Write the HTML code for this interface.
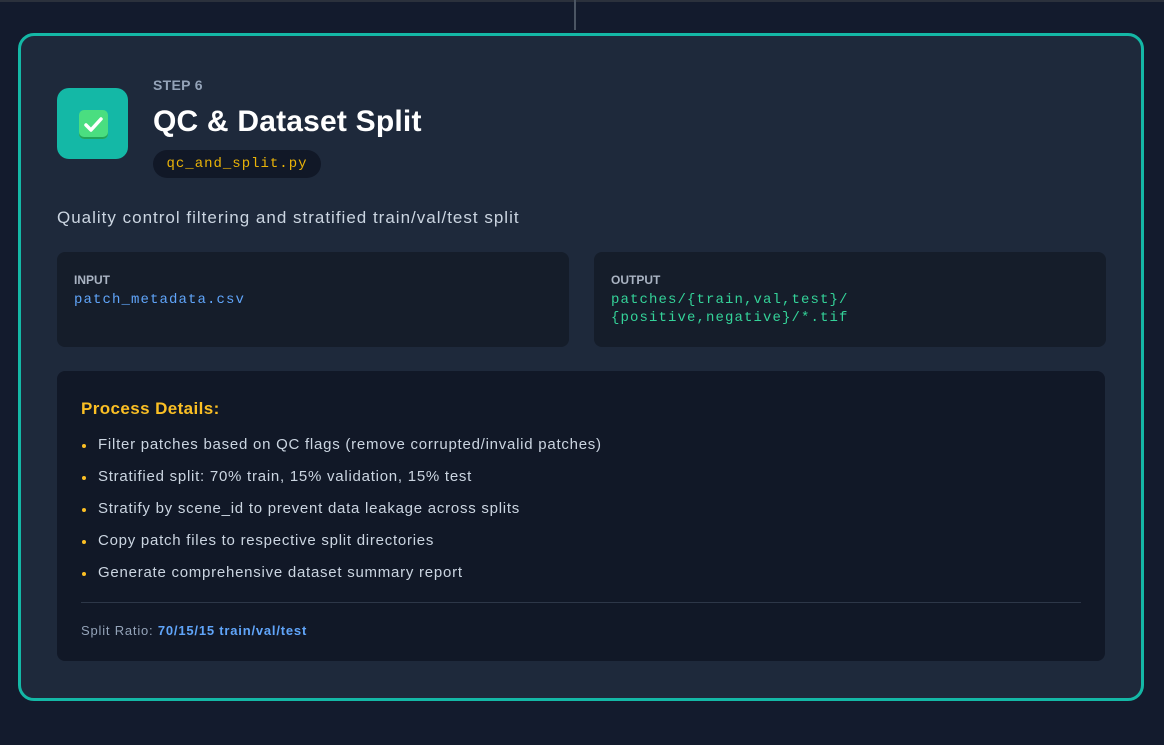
<!DOCTYPE html>
<html><head><style>
*{margin:0;padding:0;box-sizing:border-box}
body{width:1164px;height:745px;background:#131b2d;font-family:"Liberation Sans",sans-serif;position:relative;overflow:hidden}
.topline{position:absolute;left:0;top:0;width:1164px;height:2px;background:#2b313c}
.vline{position:absolute;left:574px;top:0;width:2px;height:30px;background:#4b5563}
.card{position:absolute;left:18px;top:33px;width:1126px;height:668px;border:3px solid #14b8a6;border-radius:16px;background:#1e293b}
.icon{position:absolute;left:36px;top:52px;width:71px;height:71px;border-radius:12px;background:#14b8a6}
.chk{position:absolute;left:22px;top:22px;width:29px;height:29px;border-radius:5px;background:#4ade80;box-shadow:inset 0 -2px 0 #22a55a}
.step{position:absolute;left:132px;top:41px;font-size:14px;font-weight:bold;color:#94a3b8;letter-spacing:.3px}
h1{position:absolute;left:132px;top:69px;font-size:30px;font-weight:bold;color:#fff;letter-spacing:.2px}
.pill{position:absolute;left:132px;top:114px;width:168px;height:28px;border-radius:14px;background:#111827;color:#eab308;font-family:"Liberation Mono",monospace;font-size:14px;letter-spacing:1px;line-height:28px;text-align:center}
.desc{position:absolute;left:36px;top:172px;font-size:17px;color:#cbd5e1;letter-spacing:1px}
.io{position:absolute;top:216px;width:512px;height:95px;border-radius:8px;background:#151d2a;padding:21px 17px}
.io b{display:block;font-size:12px;color:#aab4c3;margin-bottom:4px}
.io div{font-family:"Liberation Mono",monospace;font-size:14px;letter-spacing:1.1px;line-height:18px}
.pd{position:absolute;left:36px;top:335px;width:1048px;height:290px;border-radius:8px;background:#111827;padding:28px 24px}
.pd h3{font-size:17px;color:#fbbf24;margin-bottom:14px;letter-spacing:.4px}
.pd ul{list-style:none}
.pd li{font-size:15px;color:#cbd5e1;height:32px;line-height:24px;position:relative;padding-left:17px;letter-spacing:.75px}
.pd li:before{content:"";position:absolute;left:1px;top:11px;width:4px;height:4px;border-radius:2px;background:#fbbf24}
.hr{height:1px;background:#2d3748;margin-top:9px}
.sr{font-size:13px;color:#94a3b8;margin-top:20px;letter-spacing:.8px}
.sr span{color:#60a5fa;font-weight:bold}
</style></head><body>
<div class="topline"></div><div class="vline"></div>
<div class="card">
<div class="icon"><div class="chk"><svg width="29" height="29" viewBox="0 0 29 29"><path d="M7 15l5 5 10-11" stroke="#fff" stroke-width="3.5" fill="none" stroke-linecap="round" stroke-linejoin="round"/></svg></div></div>
<div class="step">STEP 6</div>
<h1>QC &amp; Dataset Split</h1>
<div class="pill">qc_and_split.py</div>
<div class="desc">Quality control filtering and stratified train/val/test split</div>
<div class="io" style="left:36px"><b>INPUT</b><div style="color:#60a5fa">patch_metadata.csv</div></div>
<div class="io" style="left:573px"><b>OUTPUT</b><div style="color:#34d399">patches/{train,val,test}/<br>{positive,negative}/*.tif</div></div>
<div class="pd"><h3>Process Details:</h3>
<ul><li>Filter patches based on QC flags (remove corrupted/invalid patches)</li>
<li>Stratified split: 70% train, 15% validation, 15% test</li>
<li>Stratify by scene_id to prevent data leakage across splits</li>
<li>Copy patch files to respective split directories</li>
<li>Generate comprehensive dataset summary report</li></ul>
<div class="hr"></div>
<div class="sr">Split Ratio: <span>70/15/15 train/val/test</span></div>
</div>
</div>
</body></html>
